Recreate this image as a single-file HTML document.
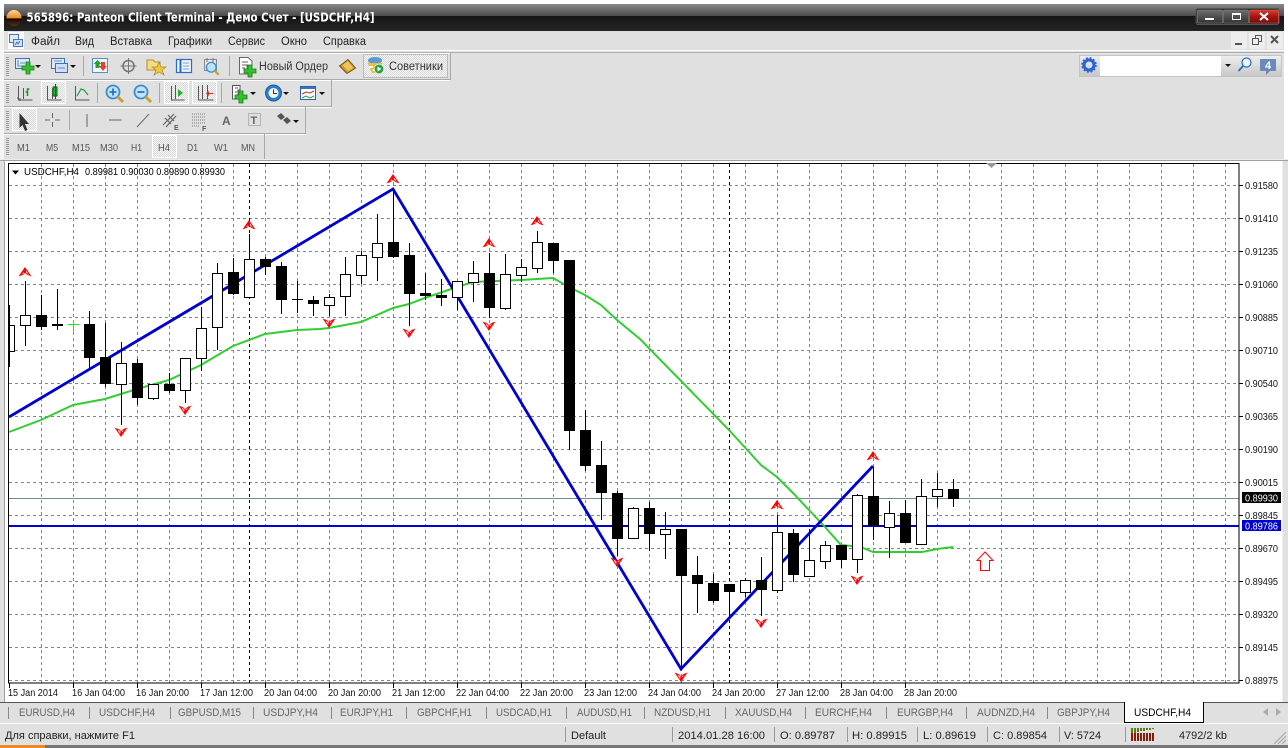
<!DOCTYPE html>
<html><head><meta charset="utf-8"><style>
html,body{margin:0;padding:0;background:#fff;width:1288px;height:748px;overflow:hidden}
svg{display:block}
text{font-family:"Liberation Sans","Noto Sans CJK SC",sans-serif}
.m{font-size:11.5px;fill:#222}
.t{font-size:11px;fill:#666}
.s{font-size:11px;fill:#222}
.a{font-size:10px;fill:#111}
.d{font-size:10px;fill:#111}
.f{font-size:10.5px;fill:#555}
.c{shape-rendering:crispEdges}
</style></head><body>
<svg xmlns="http://www.w3.org/2000/svg" width="1288" height="748" viewBox="0 0 1288 748">
<defs>
<pattern id="dith" width="2" height="2" patternUnits="userSpaceOnUse"><rect width="2" height="2" fill="#f6f6f6"/><rect width="1" height="1" fill="#d8d8d8"/><rect x="1" y="1" width="1" height="1" fill="#d8d8d8"/></pattern>
<linearGradient id="tb" x1="0" y1="0" x2="0" y2="1"><stop offset="0" stop-color="#8a8a8a"/><stop offset="1" stop-color="#4a4a4a"/></linearGradient>
<linearGradient id="tb2" x1="0" y1="0" x2="0" y2="1"><stop offset="0" stop-color="#151515"/><stop offset="1" stop-color="#242424"/></linearGradient>
<linearGradient id="btn" x1="0" y1="0" x2="0" y2="1"><stop offset="0" stop-color="#6e6e6e"/><stop offset="1" stop-color="#333"/></linearGradient>
<linearGradient id="red" x1="0" y1="0" x2="0" y2="1"><stop offset="0" stop-color="#d84030"/><stop offset=".5" stop-color="#a51510"/><stop offset="1" stop-color="#7c0c08"/></linearGradient>
<linearGradient id="cell" x1="0" y1="0" x2="0" y2="1"><stop offset="0" stop-color="#eee"/><stop offset="1" stop-color="#c8c8c8"/></linearGradient>
<linearGradient id="orb" x1="0" y1="0" x2="0" y2="1"><stop offset="0" stop-color="#ffd9a0"/><stop offset=".5" stop-color="#f08a20"/><stop offset=".55" stop-color="#100800"/><stop offset="1" stop-color="#603010"/></linearGradient>
<g id="fu"><path d="M0-5L-6.500 4.500-2.500 3 0 1 2.500 3 6.500 4.500Z" fill="#f00"/><path d="M1-1.500L4 3 1 .5Z" fill="#fff"/><path d="M-1 0L-3 2.200-1 1.200Z" fill="#fff"/></g>
<g id="fd"><path d="M0 5L-6.500-4.500-2.500-3 0-1 2.500-3 6.500-4.500Z" fill="#f00"/><path d="M-3.500-2.500L-.5-.5-1 2Z" fill="#fff"/><path d="M1.500 0L3-2 .8-.8Z" fill="#fff"/></g>
<g id="plus"><path d="M-2-6H2V-2H6V2H2V6H-2V2H-6V-2H-2Z" fill="#35c030" stroke="#1b7a18" stroke-width=".8"/></g>
<g id="dn"><path d="M0 0H6L3 3Z" fill="#111"/></g>
<g id="mag"><circle cx="7" cy="7" r="6.500" fill="#bfe2f6" stroke="#3a8ccc" stroke-width="1.800"/><path d="M11.500 11.500L17 17" stroke="#c9a030" stroke-width="3"/></g>
</defs>

<!-- app background -->
<rect class="c" x="0" y="0" width="1288" height="748" fill="#fff"/>
<rect class="c" x="0" y="31" width="1288" height="717" fill="#e0e0e0"/>
<rect class="c" x="0" y="31" width="4" height="128" fill="#f4f4f4"/>
<rect class="c" x="1284" y="0" width="4" height="160" fill="#fff"/>

<!-- title bar -->
<rect class="c" x="4" y="4" width="1280" height="12" fill="url(#tb)"/>
<rect class="c" x="4" y="16" width="1280" height="15" fill="url(#tb2)"/>
<ellipse cx="14" cy="18" rx="7.500" ry="8" fill="url(#orb)"/>
<text x="26.500" y="21.500" font-weight="bold" style="font-size:12px;font-family:'DejaVu Sans',sans-serif" fill="#fff" textLength="348" lengthAdjust="spacingAndGlyphs">565896: Panteon Client Terminal - Демо Счет - [USDCHF,H4]</text>
<rect x="1196" y="8.500" width="83" height="16" rx="2" fill="#2a2a2a" stroke="#555"/>
<rect x="1197.500" y="10" width="25" height="13" rx="1" fill="url(#btn)" stroke="#888" stroke-width=".6"/>
<rect x="1223.500" y="10" width="25" height="13" rx="1" fill="url(#btn)" stroke="#888" stroke-width=".6"/>
<rect x="1249.500" y="10" width="29" height="13" rx="1" fill="url(#red)" stroke="#c66" stroke-width=".6"/>
<rect class="c" x="1205" y="18" width="9" height="2" fill="#fff"/>
<rect class="c" x="1232.500" y="13.500" width="8" height="6" fill="none" stroke="#fff"/>
<rect class="c" x="1232" y="13" width="9" height="2" fill="#fff"/>
<path d="M1260 13L1268 20M1268 13L1260 20" stroke="#fff" stroke-width="2"/>

<!-- menu bar -->
<rect class="c" x="8" y="32" width="16" height="17" fill="#fff"/>
<rect x="9.500" y="34.500" width="9" height="8" fill="#dfeaf8" stroke="#4a78c0"/>
<rect x="13.500" y="39.500" width="9" height="7" fill="#cfe0f5" stroke="#4a78c0"/>
<path d="M15 45l2-3 1 2 2-3" stroke="#3a62a0" fill="none" stroke-width=".8"/>
<text class="m" x="31" y="45" textLength="29" lengthAdjust="spacingAndGlyphs">Файл</text>
<text class="m" x="75" y="45" textLength="19" lengthAdjust="spacingAndGlyphs">Вид</text>
<text class="m" x="110" y="45" textLength="42" lengthAdjust="spacingAndGlyphs">Вставка</text>
<text class="m" x="168" y="45" textLength="44" lengthAdjust="spacingAndGlyphs">Графики</text>
<text class="m" x="228" y="45" textLength="37" lengthAdjust="spacingAndGlyphs">Сервис</text>
<text class="m" x="281" y="45" textLength="26" lengthAdjust="spacingAndGlyphs">Окно</text>
<text class="m" x="323" y="45" textLength="43" lengthAdjust="spacingAndGlyphs">Справка</text>
<rect class="c" x="1231" y="32" width="16" height="17" fill="#ededed"/><rect class="c" x="1235" y="43" width="7" height="2" fill="#555"/>
<rect class="c" x="1249" y="32" width="16" height="17" fill="#ededed"/><rect class="c" x="1255.500" y="35.500" width="6" height="6" fill="none" stroke="#555"/><rect class="c" x="1252.500" y="38.500" width="6" height="6" fill="#ededed" stroke="#555"/>
<rect class="c" x="1267" y="32" width="16" height="17" fill="#ededed"/><path d="M1271 36L1278 43M1278 36L1271 43" stroke="#555" stroke-width="2"/>
<rect class="c" x="4" y="50" width="1280" height="1" fill="#fff"/><rect class="c" x="4" y="52" width="1280" height="1" fill="#b0b0b0"/>

<!-- toolbars frames -->
<g class="c">
<rect x="4" y="53" width="447" height="27" fill="#e0e0e0"/>
<rect x="4" y="79" width="447" height="1" fill="#a8a8a8"/><rect x="450" y="53" width="1" height="27" fill="#a8a8a8"/>
<rect x="4" y="53" width="446" height="1" fill="#fff"/>
<rect x="4" y="80" width="446" height="1" fill="#fff"/>
<rect x="4" y="106" width="328" height="1" fill="#a8a8a8"/><rect x="331" y="80" width="1" height="27" fill="#a8a8a8"/>
<rect x="4" y="107" width="327" height="1" fill="#fff"/>
<rect x="4" y="133" width="302" height="1" fill="#a8a8a8"/><rect x="305" y="107" width="1" height="27" fill="#a8a8a8"/>
<rect x="4" y="134" width="301" height="1" fill="#fff"/>
<rect x="264" y="134" width="1" height="25" fill="#a8a8a8"/>
<rect x="0" y="159" width="1288" height="1" fill="#ececec"/>
<rect x="0" y="160" width="1288" height="1" fill="#a0a0a0"/>
</g>
<path d="M7.500 57V76M7.500 84V103M7.500 111V130M7.500 138V155" stroke="#999" stroke-width="3" stroke-dasharray="1 1" class="c"/>
<path d="M83.500 56V76M229.500 56V76M97.500 83V103M159.500 83V103M221.500 83V103M69.500 110V130" stroke="#a8a8a8" class="c"/>

<!-- pressed buttons -->
<g class="c" fill="url(#dith)" stroke="#fff">
<rect x="363.500" y="54.500" width="84" height="23" stroke="#bbb"/>
<rect x="41.500" y="81.500" width="24" height="22"/>
<rect x="164.500" y="81.500" width="24" height="22"/>
<rect x="192.500" y="81.500" width="24" height="22"/>
<rect x="12.500" y="108.500" width="24" height="22"/>
<rect x="152.500" y="135.500" width="24" height="22"/>
</g>

<!-- row 1 icons -->
<rect x="15.500" y="58.500" width="14" height="10" fill="#dceaf8" stroke="#3f6fb5"/><path d="M18 60V66H27M20 63H25" stroke="#3f6fb5" fill="none" stroke-width=".8"/>
<use href="#plus" x="28" y="68"/>
<use href="#dn" x="35" y="65"/>
<rect x="51.500" y="58.500" width="13" height="10" fill="#dceaf8" stroke="#3f6fb5"/><rect x="55.500" y="63.500" width="12" height="9" fill="#cfe0f5" stroke="#3f6fb5"/>
<path d="M54 61H62M58 68H65" stroke="#3f6fb5" stroke-width=".8"/>
<use href="#dn" x="70" y="65"/>
<rect x="92.500" y="58.500" width="15" height="14" fill="#f2f7fd" stroke="#5a8ccc"/><path d="M97 60L101 64H99V68H95V64H93Z" fill="#28a030" transform="translate(.5 0)"/><path d="M102 71L106 66H104V62H100V66H98Z" fill="#e04030" transform="translate(1 0)"/>
<circle cx="128.500" cy="66" r="5.500" fill="none" stroke="#777" stroke-width="1.600"/><path d="M128.500 58V74M120.500 66H136.500" stroke="#777" stroke-width="1"/>
<path d="M147 60H153L155 62H160V70H147Z" fill="#f3dc85" stroke="#b09030"/><path d="M159 62L161 67 166 67 162 70 164 75 159 72 154 75 156 70 152 67 157 67Z" fill="#f0c840" stroke="#a88820" stroke-width=".7"/>
<rect x="176.500" y="59.500" width="15" height="13" fill="#f0f5fc" stroke="#2a6cc8" stroke-width="1.200"/><path d="M180.500 60V72" stroke="#2a6cc8" stroke-width="2"/><path d="M183 63H189M183 66H189M183 69H189" stroke="#7aa0d8"/>
<rect x="204.500" y="59.500" width="12" height="11" fill="#e8e8e8" stroke="#8a8a8a"/><path d="M207 58V62M213 58V62" stroke="#777"/>
<g transform="translate(206,62) scale(.75)"><use href="#mag"/></g>
<path d="M239.500 57.500H248L252 61V66H247V74H239.500Z" fill="#fff" stroke="#666"/><path d="M242 62H248M242 65H248M242 68H245" stroke="#666"/>
<use href="#plus" x="250" y="71"/>
<text x="259" y="70" style="font-size:11.500px;fill:#333" textLength="69" lengthAdjust="spacingAndGlyphs">Новый Ордер</text>
<path d="M339.500 66L348 59.500 355.500 68 347 73.500Z" fill="#c99a30" stroke="#7a5618"/><path d="M342.500 65L348 61.500 353.500 68 348 71Z" fill="#ecc65c"/>
<ellipse cx="375" cy="60.500" rx="7" ry="3.500" fill="#5a9ad8"/>
<path d="M367.500 63H382.500L380 73H372Z" fill="#e8c040"/>
<path d="M369 66h4v2h-4zM373 69h3v2h-3z" fill="#fff"/>
<circle cx="379" cy="69" r="4.800" fill="#2aa040" stroke="#fff" stroke-width=".6"/><path d="M377.500 66.500L381.500 69 377.500 71.500Z" fill="#fff"/>
<text x="389" y="70" style="font-size:11.500px;fill:#333" textLength="54" lengthAdjust="spacingAndGlyphs">Советники</text>

<!-- search -->
<g class="c">
<rect x="1079.500" y="55.500" width="202" height="21" fill="#fff" stroke="#c4c4c4"/>
<rect x="1080" y="56" width="20" height="20" fill="url(#cell)"/>
<rect x="1221" y="56" width="14" height="20" fill="url(#cell)"/>
<rect x="1235" y="56" width="20" height="20" fill="url(#cell)"/>
<rect x="1255" y="56" width="26" height="20" fill="url(#cell)"/>
</g>
<circle cx="1089" cy="65" r="5" fill="none" stroke="#2a62d8" stroke-width="3"/><circle cx="1089" cy="65" r="7" fill="none" stroke="#2a62d8" stroke-width="1.600" stroke-dasharray="2 1.700"/>
<use href="#dn" x="1225" y="64"/>
<circle cx="1246.500" cy="62.500" r="4.500" fill="#f0f6fc" stroke="#2a70d0" stroke-width="1.300"/><path d="M1243 66L1238.500 71" stroke="#2a70d0" stroke-width="2"/>
<rect class="c" x="1260" y="59" width="16" height="12" fill="#6a8abc"/><path d="M1266 71V75L1270 71Z" fill="#6a8abc"/>
<text x="1268" y="69" text-anchor="middle" font-weight="bold" style="font-size:11px;fill:#fff">4</text>

<!-- row 2 icons -->
<path d="M18.500 86V100H32.500M23.500 88V99M19 98H17" stroke="#555" fill="none"/><path d="M27.500 96V89H29.500M27.500 92H25.500" stroke="#1a9a20" stroke-width="1.500" fill="none"/><path d="M20 101V98" stroke="#555" fill="none"/>
<path d="M47.500 86V100H61.500M52.500 88V99" stroke="#555" fill="none"/><rect class="c" x="53" y="87" width="4" height="9" fill="#1eb838" stroke="#0a6014"/><path d="M55.500 84V99" stroke="#0a6014"/>
<path d="M75.500 86V100H89.500" stroke="#555" fill="none"/><path d="M77 96L81 89 84 90 88 95" stroke="#2a9a38" fill="none" stroke-width="1.200"/>
<g transform="translate(106,85)"><use href="#mag"/><path d="M3.500 7H10.500M7 3.500V10.500" stroke="#2a70c8" stroke-width="1.800"/></g>
<g transform="translate(134,85)"><use href="#mag"/><path d="M3.500 7H10.500" stroke="#2a70c8" stroke-width="1.800"/></g>
<path d="M171.500 86V100H184.500M175.500 85V99" stroke="#555" fill="none"/><path d="M178 89L183 93 178 97Z" fill="#28b030"/>
<path d="M198.500 86V100H213.500M202.500 85V99M207.500 85V99" stroke="#555" fill="none"/><path d="M213 93H209V91L206 93.500 209 96V94H213Z" fill="#d83020"/>
<path d="M232.500 85.500H240V90H238V99H232.500Z" fill="#fff" stroke="#555"/><path d="M235 88H238M235 92H237" stroke="#555"/>
<use href="#plus" x="241" y="97"/>
<use href="#dn" x="250" y="92"/>
<circle cx="273.500" cy="93" r="8" fill="#2a7fd0" stroke="#1a5aa0"/><circle cx="273.500" cy="93" r="5" fill="#f4f4e8"/><path d="M273.500 89.500V93.500H277" stroke="#333" fill="none"/>
<use href="#dn" x="283" y="92"/>
<rect x="300.500" y="86.500" width="15" height="13" fill="#fff" stroke="#2a60b0"/><rect class="c" x="301" y="87" width="14" height="2" fill="#3a70c0"/><path d="M302 94L306 92 310 93 314 91" stroke="#c03020" fill="none"/><path d="M302 98L306 96 310 98 314 96" stroke="#30a040" fill="none"/>
<use href="#dn" x="319" y="92"/>

<!-- row 3 icons -->
<path d="M19.500 113V128L22.500 125 25 131 27.500 130 25 124H29Z" fill="#333"/>
<path d="M45 120H50M55 120H60M52.500 113V118M52.500 122V127" stroke="#666" class="c"/>
<path d="M87 114V127" stroke="#666" class="c"/>
<path d="M109 120H121.500" stroke="#666" class="c"/>
<path d="M137 127L149 114" stroke="#777" stroke-width="1.200"/>
<path d="M163 125L174 114M166 127L176 116M165 118L171 124M168 115L174 121" stroke="#666" stroke-width="1.200" fill="none"/>
<text x="174" y="130" font-weight="bold" style="font-size:7px;fill:#555">E</text>
<path d="M192 114H206M192 117H206M192 120H206M192 123H206M192 126H200" stroke="#777" stroke-dasharray="1 1" class="c"/>
<text x="202" y="131" font-weight="bold" style="font-size:7px;fill:#555">F</text>
<text x="222" y="125" font-weight="bold" style="font-size:12px;fill:#666">A</text>
<rect x="248.500" y="113.500" width="12" height="12" fill="none" stroke="#888" stroke-dasharray="1 1" class="c"/>
<text x="250.500" y="124" font-weight="bold" style="font-size:11px;fill:#666">T</text>
<path d="M277 116L281 113 285 117 281 120ZM283 120L287 117 291 121 287 124Z" fill="#555"/>
<use href="#dn" x="293" y="120"/>

<!-- row 4 -->
<text class="f" x="17" y="151" textLength="13" lengthAdjust="spacingAndGlyphs">M1</text>
<text class="f" x="46" y="151" textLength="12" lengthAdjust="spacingAndGlyphs">M5</text>
<text class="f" x="72" y="151" textLength="18" lengthAdjust="spacingAndGlyphs">M15</text>
<text class="f" x="100" y="151" textLength="18" lengthAdjust="spacingAndGlyphs">M30</text>
<text class="f" x="131" y="151" textLength="11" lengthAdjust="spacingAndGlyphs">H1</text>
<text class="f" x="158" y="151" textLength="12" lengthAdjust="spacingAndGlyphs">H4</text>
<text class="f" x="187" y="151" textLength="11" lengthAdjust="spacingAndGlyphs">D1</text>
<text class="f" x="214" y="151" textLength="14" lengthAdjust="spacingAndGlyphs">W1</text>
<text class="f" x="241" y="151" textLength="14" lengthAdjust="spacingAndGlyphs">MN</text>

<!-- chart -->
<rect class="c" x="5" y="161" width="1277" height="541" fill="#fff"/>
<rect class="c" x="4" y="161" width="1" height="541" fill="#a0a0a0"/>
<rect class="c" x="1282" y="161" width="1" height="541" fill="#f0f0f0"/>
<g class="c" stroke="#778899" stroke-dasharray="3 3" fill="none">
<path d="M9 185.500H1239M9 218.500H1239M9 251.500H1239M9 284.500H1239M9 317.500H1239M9 350.500H1239M9 383.500H1239M9 416.500H1239M9 449.500H1239M9 482.500H1239M9 515.500H1239M9 548.500H1239M9 581.500H1239M9 614.500H1239M9 647.500H1239M9 680.500H1239"/>
<path d="M41.500 164V683M73.500 164V683M105.500 164V683M137.500 164V683M169.500 164V683M201.500 164V683M233.500 164V683M265.500 164V683M297.500 164V683M329.500 164V683M361.500 164V683M393.500 164V683M425.500 164V683M457.500 164V683M489.500 164V683M521.500 164V683M553.500 164V683M585.500 164V683M617.500 164V683M649.500 164V683M681.500 164V683M713.500 164V683M745.500 164V683M777.500 164V683M809.500 164V683M841.500 164V683M873.500 164V683M905.500 164V683M937.500 164V683M969.500 164V683M1001.500 164V683M1033.500 164V683M1065.500 164V683M1097.500 164V683M1129.500 164V683M1161.500 164V683M1193.500 164V683M1225.500 164V683"/>
</g>
<path class="c" d="M249.500 164V683M729.500 164V683" stroke="#000" stroke-dasharray="3 3"/>
<path class="c" d="M9 498.500H1239" stroke="#778899"/>
<path class="c" d="M9 526H1239" stroke="#0000cd" stroke-width="2"/>

<!-- green MA -->
<polyline fill="none" stroke="#32cd32" stroke-width="2" points="9,432 41,420 73,405 105,399 137,389 169,380 201,365 233,346 265,334 297,330 320,329 329,328 361,322 393,308 409,304 425,298 457,287 473,282 521,280 553,278 569,287 585,295 601,305 617,320 640,339 729,430 761,465 777,477 793,493 809,510 825,527 841,545 852,546 863,548 873,552 922,552 937,549 953,547"/>
<!-- blue zigzag -->
<polyline fill="none" stroke="#0000cd" stroke-width="2.800" points="9,417 393,189 681,669 873,466"/>

<!-- candles: wicks -->
<path class="c" stroke="#000" fill="none" d="M9.500 305V367M25.500 281V346M41.500 295V330M57.500 289V330M89.500 311V368M105.500 323V387M121.500 342V425M137.500 359V405M153.500 384V400M169.500 373V393M185.500 358V403M201.500 307V371M217.500 263V350M233.500 258V295M249.500 234V297M265.500 257V275M281.500 262V314M297.500 281V313M313.500 296V316M329.500 294V316M345.500 257V316M361.500 251V284M377.500 214V281M393.500 189V258M409.500 243V326M425.500 273V300M441.500 279V306M457.500 281V310M473.500 261V302M489.500 253V318M505.500 254V310M521.500 259V282M537.500 231V273M553.500 243V273M569.500 260V450M585.500 410V471M601.500 441V520M617.500 491V556M633.500 507V538M649.500 502V551M665.500 512V559M681.500 529V670M697.500 556V613M713.500 574V603M729.500 584V616M745.500 578V597M761.500 557V616M777.500 515V593M793.500 529V582M809.500 529V576M825.500 541V569M841.500 545V568M857.500 494V573M873.500 467V540M889.500 501V558M905.500 500V543M921.500 479V544M937.500 473V507M953.500 479V507"/>
<path class="c" stroke="#0f0" fill="none" d="M68 324.500H79M73.500 320V333"/>
<path class="c" stroke="#000" d="M292 299.500H303"/>
<!-- black bodies -->
<g class="c" fill="#000">
<rect x="36" y="315" width="11" height="12"/><rect x="52" y="324" width="11" height="2"/><rect x="84" y="324" width="11" height="34"/><rect x="100" y="357" width="11" height="27"/><rect x="132" y="363" width="11" height="35"/><rect x="164" y="384" width="11" height="7"/><rect x="228" y="272" width="11" height="22"/><rect x="260" y="259" width="11" height="8"/><rect x="276" y="266" width="11" height="34"/><rect x="308" y="300" width="11" height="4"/>
<rect x="388" y="242" width="11" height="15"/><rect x="404" y="255" width="11" height="39"/><rect x="420" y="293" width="11" height="3"/><rect x="436" y="295" width="11" height="3"/><rect x="484" y="273" width="11" height="35"/><rect x="548" y="243" width="11" height="18"/><rect x="564" y="260" width="11" height="171"/><rect x="580" y="430" width="11" height="36"/><rect x="596" y="465" width="11" height="28"/><rect x="612" y="493" width="11" height="46"/><rect x="644" y="508" width="11" height="26"/><rect x="676" y="529" width="11" height="47"/><rect x="692" y="575" width="11" height="9"/><rect x="708" y="583" width="11" height="18"/><rect x="724" y="584" width="11" height="8"/><rect x="756" y="580" width="11" height="10"/><rect x="788" y="533" width="11" height="42"/><rect x="836" y="545" width="11" height="15"/><rect x="868" y="496" width="11" height="30"/><rect x="900" y="513" width="11" height="30"/><rect x="948" y="489" width="11" height="10"/>
</g>
<!-- white bodies -->
<g class="c" fill="#fff" stroke="#000">
<rect x="9.500" y="325.500" width="5" height="26"/><rect x="20.500" y="315.500" width="10" height="10"/><rect x="116.500" y="363.500" width="10" height="21"/><rect x="148.500" y="384.500" width="10" height="14"/><rect x="180.500" y="358.500" width="10" height="32"/><rect x="196.500" y="328.500" width="10" height="30"/><rect x="212.500" y="273.500" width="10" height="54"/><rect x="244.500" y="259.500" width="10" height="38"/><rect x="324.500" y="297.500" width="10" height="8"/><rect x="340.500" y="274.500" width="10" height="22"/><rect x="356.500" y="255.500" width="10" height="20"/><rect x="372.500" y="243.500" width="10" height="14"/><rect x="452.500" y="281.500" width="10" height="16"/><rect x="468.500" y="273.500" width="10" height="9"/><rect x="500.500" y="274.500" width="10" height="34"/><rect x="516.500" y="267.500" width="10" height="8"/><rect x="532.500" y="242.500" width="10" height="26"/><rect x="628.500" y="508.500" width="10" height="30"/><rect x="660.500" y="529.500" width="10" height="5"/><rect x="740.500" y="580.500" width="10" height="12"/><rect x="772.500" y="532.500" width="10" height="58"/><rect x="804.500" y="560.500" width="10" height="16"/><rect x="820.500" y="545.500" width="10" height="16"/><rect x="852.500" y="495.500" width="10" height="64"/><rect x="884.500" y="513.500" width="10" height="14"/><rect x="916.500" y="496.500" width="10" height="48"/><rect x="932.500" y="489.500" width="10" height="7"/>
</g>

<!-- fractal arrows -->
<use href="#fu" x="25" y="272"/><use href="#fu" x="249" y="225"/><use href="#fu" x="393" y="179"/><use href="#fu" x="489" y="243"/><use href="#fu" x="537" y="221"/><use href="#fu" x="777" y="505"/><use href="#fu" x="873" y="456"/>
<use href="#fd" x="121" y="432"/><use href="#fd" x="185" y="410"/><use href="#fd" x="329" y="323"/><use href="#fd" x="409" y="333"/><use href="#fd" x="489" y="326"/><use href="#fd" x="617" y="562"/><use href="#fd" x="681" y="677"/><use href="#fd" x="761" y="623"/><use href="#fd" x="857" y="580"/>
<path d="M985 552L993 560.500H989.500V570.500H980.500V560.500H977Z" fill="#fff" stroke="#f00"/>

<!-- frame -->
<rect class="c" x="8.500" y="163.500" width="1230.500" height="519.500" fill="none" stroke="#000"/>
<path d="M986 163H997L991.500 168Z" fill="#999"/>

<!-- header -->
<path d="M12 170.500H19L15.500 174.500Z" fill="#000"/>
<text x="24" y="175" style="font-size:10.500px;fill:#000" textLength="55" lengthAdjust="spacingAndGlyphs">USDCHF,H4</text>
<text x="85" y="175" style="font-size:10.500px;fill:#000" textLength="140" lengthAdjust="spacingAndGlyphs">0.89981 0.90030 0.89890 0.89930</text>

<!-- price axis -->
<path class="c" stroke="#000" d="M1239 185.500H1243M1239 218.500H1243M1239 251.500H1243M1239 284.500H1243M1239 317.500H1243M1239 350.500H1243M1239 383.500H1243M1239 416.500H1243M1239 449.500H1243M1239 482.500H1243M1239 515.500H1243M1239 548.500H1243M1239 581.500H1243M1239 614.500H1243M1239 647.500H1243M1239 680.500H1243"/>
<text class="a" x="1245" y="189" textLength="33" lengthAdjust="spacingAndGlyphs">0.91580</text>
<text class="a" x="1245" y="222" textLength="33" lengthAdjust="spacingAndGlyphs">0.91410</text>
<text class="a" x="1245" y="255" textLength="33" lengthAdjust="spacingAndGlyphs">0.91235</text>
<text class="a" x="1245" y="288" textLength="33" lengthAdjust="spacingAndGlyphs">0.91060</text>
<text class="a" x="1245" y="321" textLength="33" lengthAdjust="spacingAndGlyphs">0.90885</text>
<text class="a" x="1245" y="354" textLength="33" lengthAdjust="spacingAndGlyphs">0.90710</text>
<text class="a" x="1245" y="387" textLength="33" lengthAdjust="spacingAndGlyphs">0.90540</text>
<text class="a" x="1245" y="420" textLength="33" lengthAdjust="spacingAndGlyphs">0.90365</text>
<text class="a" x="1245" y="453" textLength="33" lengthAdjust="spacingAndGlyphs">0.90190</text>
<text class="a" x="1245" y="486" textLength="33" lengthAdjust="spacingAndGlyphs">0.90015</text>
<text class="a" x="1245" y="519" textLength="33" lengthAdjust="spacingAndGlyphs">0.89845</text>
<text class="a" x="1245" y="552" textLength="33" lengthAdjust="spacingAndGlyphs">0.89670</text>
<text class="a" x="1245" y="585" textLength="33" lengthAdjust="spacingAndGlyphs">0.89495</text>
<text class="a" x="1245" y="618" textLength="33" lengthAdjust="spacingAndGlyphs">0.89320</text>
<text class="a" x="1245" y="651" textLength="33" lengthAdjust="spacingAndGlyphs">0.89145</text>
<text class="a" x="1245" y="684" textLength="33" lengthAdjust="spacingAndGlyphs">0.88975</text>
<rect class="c" x="1242" y="492" width="39" height="11" fill="#000"/>
<text x="1245" y="501.500" style="font-size:10px;fill:#fff" textLength="33" lengthAdjust="spacingAndGlyphs">0.89930</text>
<rect class="c" x="1242" y="520" width="39" height="11" fill="#0000cd"/>
<text x="1245" y="529.500" style="font-size:10px;fill:#fff" textLength="33" lengthAdjust="spacingAndGlyphs">0.89786</text>

<!-- time axis -->
<path class="c" stroke="#000" d="M9.500 683V688M73.500 683V688M137.500 683V688M201.500 683V688M265.500 683V688M329.500 683V688M393.500 683V688M457.500 683V688M521.500 683V688M585.500 683V688M649.500 683V688M713.500 683V688M777.500 683V688M841.500 683V688M905.500 683V688"/>
<text class="d" x="8" y="696" textLength="50" lengthAdjust="spacingAndGlyphs">15 Jan 2014</text>
<text class="d" x="72" y="696" textLength="53" lengthAdjust="spacingAndGlyphs">16 Jan 04:00</text>
<text class="d" x="136" y="696" textLength="53" lengthAdjust="spacingAndGlyphs">16 Jan 20:00</text>
<text class="d" x="200" y="696" textLength="53" lengthAdjust="spacingAndGlyphs">17 Jan 12:00</text>
<text class="d" x="264" y="696" textLength="53" lengthAdjust="spacingAndGlyphs">20 Jan 04:00</text>
<text class="d" x="328" y="696" textLength="53" lengthAdjust="spacingAndGlyphs">20 Jan 20:00</text>
<text class="d" x="392" y="696" textLength="53" lengthAdjust="spacingAndGlyphs">21 Jan 12:00</text>
<text class="d" x="456" y="696" textLength="53" lengthAdjust="spacingAndGlyphs">22 Jan 04:00</text>
<text class="d" x="520" y="696" textLength="53" lengthAdjust="spacingAndGlyphs">22 Jan 20:00</text>
<text class="d" x="584" y="696" textLength="53" lengthAdjust="spacingAndGlyphs">23 Jan 12:00</text>
<text class="d" x="648" y="696" textLength="53" lengthAdjust="spacingAndGlyphs">24 Jan 04:00</text>
<text class="d" x="712" y="696" textLength="53" lengthAdjust="spacingAndGlyphs">24 Jan 20:00</text>
<text class="d" x="776" y="696" textLength="53" lengthAdjust="spacingAndGlyphs">27 Jan 12:00</text>
<text class="d" x="840" y="696" textLength="53" lengthAdjust="spacingAndGlyphs">28 Jan 04:00</text>
<text class="d" x="904" y="696" textLength="53" lengthAdjust="spacingAndGlyphs">28 Jan 20:00</text>

<!-- tabs -->
<g class="c">
<rect x="0" y="702" width="1288" height="1" fill="#555"/>
<rect x="0" y="703" width="1288" height="20" fill="#e0e0e0"/>
<rect x="0" y="723" width="1288" height="1" fill="#fff"/>
<path d="M8.500 707V719M89.500 707V719M170.500 707V719M253.500 707V719M331.500 707V719M406.500 707V719M486.500 707V719M566.500 707V719M644.500 707V719M725.500 707V719M805.500 707V719M886.500 707V719M966.500 707V719M1047.500 707V719" stroke="#888"/>
<path d="M1124.500 702V722.500H1203.500V702" stroke="#000" fill="#fff"/>
<rect x="1125" y="702" width="78" height="1" fill="#fff"/>
</g>
<text class="t" x="19" y="716" textLength="56" lengthAdjust="spacingAndGlyphs">EURUSD,H4</text>
<text class="t" x="99" y="716" textLength="56" lengthAdjust="spacingAndGlyphs">USDCHF,H4</text>
<text class="t" x="178" y="716" textLength="63" lengthAdjust="spacingAndGlyphs">GBPUSD,M15</text>
<text class="t" x="263" y="716" textLength="55" lengthAdjust="spacingAndGlyphs">USDJPY,H4</text>
<text class="t" x="340" y="716" textLength="53" lengthAdjust="spacingAndGlyphs">EURJPY,H1</text>
<text class="t" x="417" y="716" textLength="55" lengthAdjust="spacingAndGlyphs">GBPCHF,H1</text>
<text class="t" x="496" y="716" textLength="56" lengthAdjust="spacingAndGlyphs">USDCAD,H1</text>
<text class="t" x="577" y="716" textLength="55" lengthAdjust="spacingAndGlyphs">AUDUSD,H1</text>
<text class="t" x="654" y="716" textLength="57" lengthAdjust="spacingAndGlyphs">NZDUSD,H1</text>
<text class="t" x="735" y="716" textLength="57" lengthAdjust="spacingAndGlyphs">XAUUSD,H4</text>
<text class="t" x="815" y="716" textLength="57" lengthAdjust="spacingAndGlyphs">EURCHF,H4</text>
<text class="t" x="897" y="716" textLength="56" lengthAdjust="spacingAndGlyphs">EURGBP,H4</text>
<text class="t" x="977" y="716" textLength="58" lengthAdjust="spacingAndGlyphs">AUDNZD,H4</text>
<text class="t" x="1057" y="716" textLength="53" lengthAdjust="spacingAndGlyphs">GBPJPY,H4</text>
<text x="1134" y="716" style="font-size:11px;fill:#000" textLength="57" lengthAdjust="spacingAndGlyphs">USDCHF,H4</text>
<path d="M1268 716V708L1263 712ZM1276 708V716L1281 712Z" fill="#aaa"/>

<!-- status -->
<g class="c">
<rect x="0" y="724" width="1288" height="21" fill="#e0e0e0"/>
<path d="M565.500 727V742M672.500 727V742M774.500 727V742M847.500 727V742M917.500 727V742M987.500 727V742M1059.500 727V742M1125.500 727V742" stroke="#999"/>
<rect x="0" y="745" width="1288" height="3" fill="#777"/>
<rect x="0" y="745" width="45" height="3" fill="#f08a20"/>
</g>
<text class="s" x="5" y="739" textLength="130" lengthAdjust="spacingAndGlyphs">Для справки, нажмите F1</text>
<text class="s" x="571" y="739" textLength="35" lengthAdjust="spacingAndGlyphs">Default</text>
<text class="s" x="678" y="739" textLength="87" lengthAdjust="spacingAndGlyphs">2014.01.28 16:00</text>
<text class="s" x="780" y="739" textLength="55" lengthAdjust="spacingAndGlyphs">O: 0.89787</text>
<text class="s" x="852" y="739" textLength="55" lengthAdjust="spacingAndGlyphs">H: 0.89915</text>
<text class="s" x="923" y="739" textLength="53" lengthAdjust="spacingAndGlyphs">L: 0.89619</text>
<text class="s" x="993" y="739" textLength="54" lengthAdjust="spacingAndGlyphs">C: 0.89854</text>
<text class="s" x="1064" y="739" textLength="37" lengthAdjust="spacingAndGlyphs">V: 5724</text>
<text class="s" x="1179" y="739" textLength="48" lengthAdjust="spacingAndGlyphs">4792/2 kb</text>
<path class="c" d="M1132 733V741M1135 733V741M1138 733V741M1141 733V741M1144 733V741M1147 733V741M1150 733V741M1153 733V741" stroke="#8a1a08" stroke-width="2"/>
<path class="c" d="M1132 728V733M1135 728V733M1138 728V732M1141 728V731M1144 728V731M1147 728V730M1150 728V730M1153 728V729" stroke="#5a7a10" stroke-width="2"/>
<path d="M1274 744L1286 732M1278 744L1286 736M1282 744L1286 740" stroke="#aaa" stroke-width="1.200"/>
</svg>
</body></html>
